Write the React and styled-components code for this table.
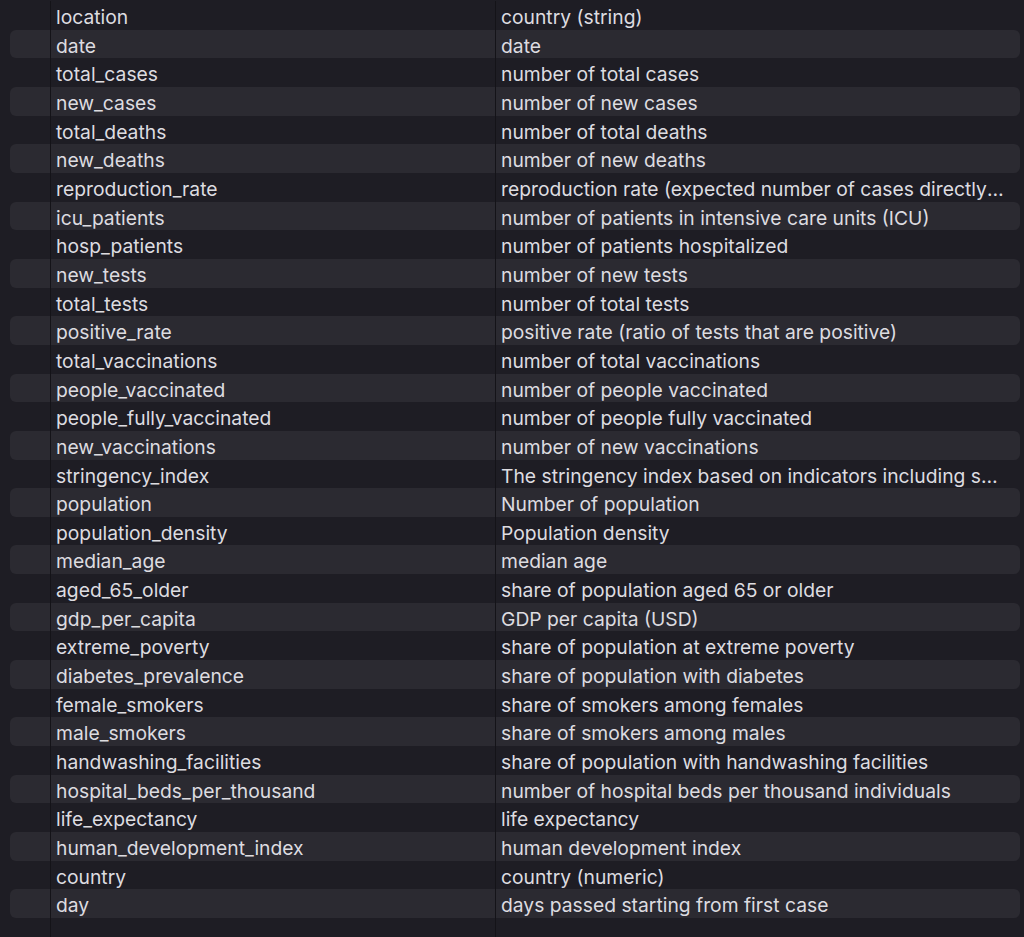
import React from "react";
import styled, { createGlobalStyle } from "styled-components";

const GlobalStyle = createGlobalStyle`
  html, body {
    margin: 0;
    padding: 0;
    background: #1e1d24;
  }
  body {
    font-family: Inter, "Liberation Sans", sans-serif;
  }
`;

const Table = styled.div`
  display: flex;
  flex-direction: column;
  height: 100vh;
  padding-top: 1px;
  box-sizing: border-box;
  overflow: hidden;
`;

const Row = styled.div`
  display: grid;
  grid-template-columns: 40px 445px minmax(0, 1fr);
  height: 28.67px;
  margin: 0 4px 0 10px;
  border-radius: 6px;
  background: ${({ shaded }) => (shaded ? "#2b2a31" : "transparent")};
  flex-shrink: 0;
`;

const Filler = styled(Row)`
  flex: 1;
  height: auto;
`;

const Cell = styled.div`
  display: block;
  min-width: 0;
  padding-left: 5px;
  padding-top: 3px;
  box-sizing: border-box;
  border-left: ${({ first }) => (first ? "none" : "1px solid #141318")};
  color: #dddce0;
  font-size: 19.3px;
  line-height: 26px;
  white-space: nowrap;
  overflow: hidden;
  text-overflow: ellipsis;
  padding-right: ${({ last }) => (last ? "13px" : "0")};
`;

const rows = [
  ["location", "country (string)"],
  ["date", "date"],
  ["total_cases", "number of total cases"],
  ["new_cases", "number of new cases"],
  ["total_deaths", "number of total deaths"],
  ["new_deaths", "number of new deaths"],
  ["reproduction_rate", "reproduction rate (expected number of cases directly generated by one case)"],
  ["icu_patients", "number of patients in intensive care units (ICU)"],
  ["hosp_patients", "number of patients hospitalized"],
  ["new_tests", "number of new tests"],
  ["total_tests", "number of total tests"],
  ["positive_rate", "positive rate (ratio of tests that are positive)"],
  ["total_vaccinations", "number of total vaccinations"],
  ["people_vaccinated", "number of people vaccinated"],
  ["people_fully_vaccinated", "number of people fully vaccinated"],
  ["new_vaccinations", "number of new vaccinations"],
  ["stringency_index", "The stringency index based on indicators including school closures"],
  ["population", "Number of population"],
  ["population_density", "Population density"],
  ["median_age", "median age"],
  ["aged_65_older", "share of population aged 65 or older"],
  ["gdp_per_capita", "GDP per capita (USD)"],
  ["extreme_poverty", "share of population at extreme poverty"],
  ["diabetes_prevalence", "share of population with diabetes"],
  ["female_smokers", "share of smokers among females"],
  ["male_smokers", "share of smokers among males"],
  ["handwashing_facilities", "share of population with handwashing facilities"],
  ["hospital_beds_per_thousand", "number of hospital beds per thousand individuals"],
  ["life_expectancy", "life expectancy"],
  ["human_development_index", "human development index"],
  ["country", "country (numeric)"],
  ["day", "days passed starting from first case"],
];

const App = () => (
  <>
    <GlobalStyle />
    <Table>
      {rows.map(([name, desc], i) => (
        <Row key={name} shaded={i % 2 === 1}>
          <Cell first />
          <Cell>{name}</Cell>
          <Cell last>{desc}</Cell>
        </Row>
      ))}
      <Filler>
        <Cell first />
        <Cell />
        <Cell last />
      </Filler>
    </Table>
  </>
);

export default App;
